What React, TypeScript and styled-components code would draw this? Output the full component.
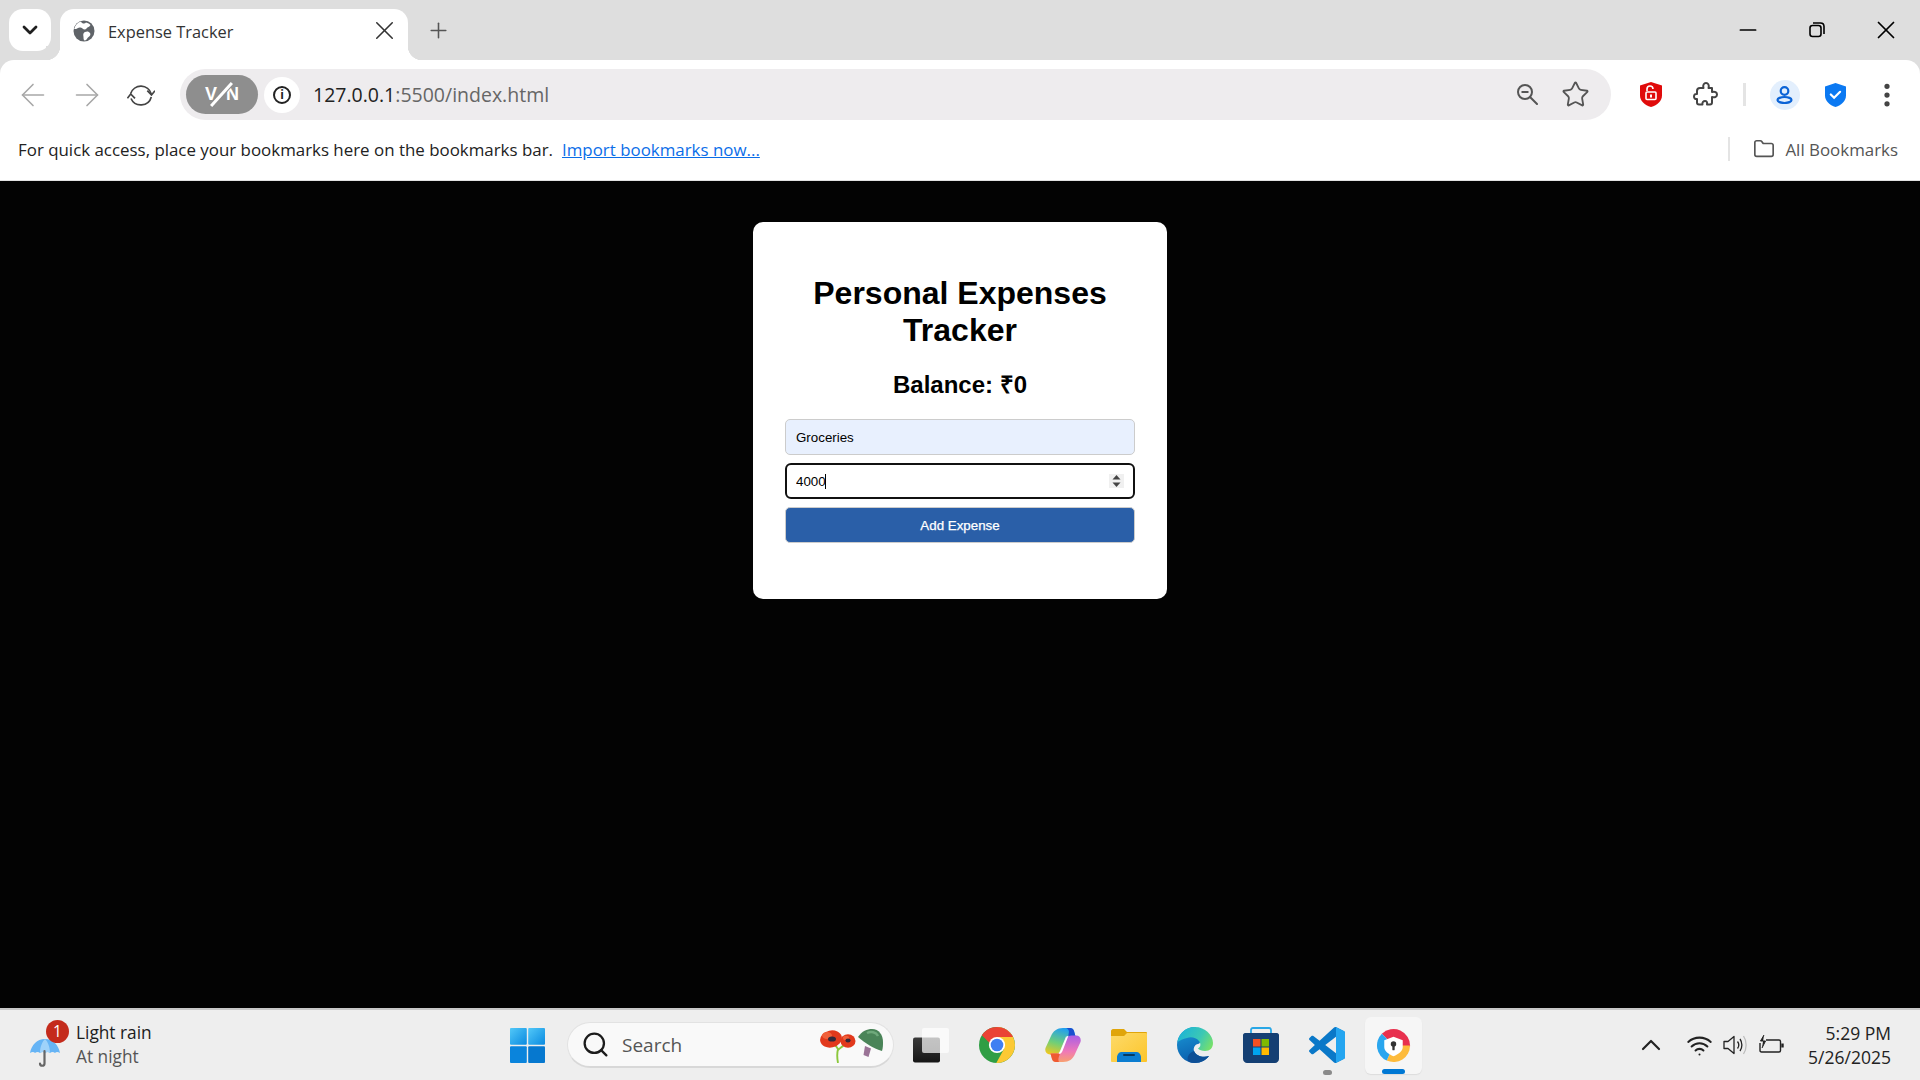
import React from "react";
import styled, { createGlobalStyle } from "styled-components";
import {
  ArrowLeft,
  ArrowRight,
  ChevronDown,
  ChevronUp,
  EllipsisVertical,
  Folder,
  Minus,
  Plus,
  Search,
  Star,
  Wifi,
  X,
} from "lucide-react";

const GlobalStyle = createGlobalStyle`
  html, body {
    margin: 0;
    padding: 0;
    overflow: hidden;
    font-family: "Open Sans", "Noto Sans", sans-serif;
  }
  * { box-sizing: border-box; }
`;

const GlobeIcon = () => (
  <svg width="22" height="22" viewBox="0 0 22 22">
    <circle cx="11" cy="11" r="10.5" fill="#5f6368" />
    <path d="M8 1.500C9 4 12 4 13 2.500c2 .5 3.500 1.500 4.500 2.500-1 2-3 2-4 3.500-1 1.500-3 1-4 0S6 7 5 8 2 9 1.200 9C2 5.500 4.500 2.500 8 1.500z" fill="#fff" />
    <path d="M12 12c2-1 4-.5 5 1s0 3-1.500 4-2 3.500-3.500 3.500-1.500-2-1.500-3.500-1-3.500 1.500-5z" fill="#fff" />
  </svg>
);

const ReloadIcon = () => (
  <svg width="28" height="24" viewBox="0 0 28 24" fill="none" stroke="#444" strokeWidth="1.700">
    <path d="M3.700 10.500A10.800 10.800 0 0 1 24.300 11" />
    <path d="M20.300 7.700l4.200 4.300 3.500-4.300" />
    <path d="M24.300 14A10.800 10.800 0 0 1 4 15.500" />
    <path d="M.4 15.300L3.700 11l4.300 4.300" />
  </svg>
);

const ZoomOutIcon = () => (
  <svg width="21" height="21" viewBox="0 0 21 21" fill="none" stroke="#555" strokeWidth="2">
    <circle cx="8" cy="8" r="7" />
    <path d="M13 13l7 7" strokeLinecap="round" />
    <path d="M4.500 8h7" />
  </svg>
);

const RedShield = () => (
  <svg width="22" height="25" viewBox="0 0 22 25">
    <path d="M11 0l11 3.500v10c0 5.500-4.500 9.500-11 11.500C4.500 23 0 19 0 13.500v-10z" fill="#e00b0b" />
    <path d="M7 9V7a3 3 0 0 1 6 0" fill="none" stroke="#fff" strokeWidth="1.600" />
    <rect x="6" y="10" width="10" height="7.500" rx="1" fill="none" stroke="#fff" strokeWidth="1.600" />
    <rect x="10" y="12.500" width="2" height="3" fill="#fff" />
  </svg>
);

const PuzzleIcon = () => (
  <svg width="25" height="25" viewBox="0 0 25 25" fill="none" stroke="#444" strokeWidth="2" strokeLinejoin="round">
    <path d="M7 6h3.500C9.500 3 11 1 13 1s3.500 2 2.500 5H19v4c3-1 5 .5 5 2.500S22 16 19 15v5.500c0 1-1 2-2 2h-3c.5-2.500-.5-3.500-2-3.500s-3 1-2.500 3.500H6c-1 0-2-1-2-2V17c-2 .5-3-1-3-2.500S2 11.500 4 12V9c0-2 1-3 3-3z" />
  </svg>
);

const ProfileIcon = () => (
  <svg width="17" height="18" viewBox="0 0 17 18" fill="none" stroke="#0b63d6" strokeWidth="2.200">
    <circle cx="8.500" cy="5" r="3.800" />
    <ellipse cx="8.500" cy="14" rx="7" ry="3" />
  </svg>
);

const BlueShield = () => (
  <svg width="21" height="24" viewBox="0 0 21 24">
    <path d="M10.500 0l10.500 3.500v9C21 18 16.500 22 10.500 24 4.500 22 0 18 0 12.500v-9z" fill="#0b79f2" />
    <path d="M5.800 11.500l3.300 3.300 6-6" fill="none" stroke="#fff" strokeWidth="2.200" strokeLinecap="round" />
  </svg>
);

const RestoreIcon = () => (
  <svg width="16" height="16" viewBox="0 0 16 16" fill="none" stroke="#000" strokeWidth="1.600">
    <rect x="1" y="3.500" width="11" height="11" rx="2.500" />
    <path d="M4 1h7.500C13.500 1 15 2.500 15 4.500V12" />
  </svg>
);

const SpinnerIcon = () => (
  <svg width="9" height="12" viewBox="0 0 9 12" fill="#444">
    <path d="M4.500 0L8.500 4.500H.5z" />
    <path d="M4.500 12L.5 7.500h8z" />
  </svg>
);

const UmbrellaIcon = () => (
  <svg width="30" height="30" viewBox="0 0 30 30">
    <path d="M15 1C7 1 1.500 7 0 15c2-1.500 4-1.500 5 0 1.500-1.500 3.500-1.500 5 0 1.500-1.500 3.500-1.500 5 0 1.500-1.500 3.500-1.500 5 0 1.500-1.500 3.500-1.500 5 0 1-1.500 3-1.500 5 0C28.500 7 23 1 15 1z" fill="#66b4f5" />
    <path d="M15 1c-3 3-5 8-5 14 1.500-1.500 3.500-1.500 5 0 1.500-1.500 3.500-1.500 5 0 0-6-2-11-5-14z" fill="#9fd2fa" />
    <path d="M14.500 13v12.500c0 3-4.500 3-4.500 0" fill="none" stroke="#666" strokeWidth="2.200" strokeLinecap="round" />
  </svg>
);

const WindowsLogo = () => (
  <svg width="35" height="35" viewBox="0 0 35 35">
    <defs>
      <linearGradient id="winA" x1="0" y1="0" x2="1" y2="1">
        <stop offset="0" stopColor="#52c8f8" />
        <stop offset="1" stopColor="#0a8ae0" />
      </linearGradient>
    </defs>
    <rect x="0" y="0" width="16.800" height="16.800" rx="1" fill="url(#winA)" />
    <rect x="18.200" y="0" width="16.800" height="16.800" rx="1" fill="url(#winA)" />
    <rect x="0" y="18.200" width="16.800" height="16.800" rx="1" fill="#0a84dc" />
    <rect x="18.200" y="18.200" width="16.800" height="16.800" rx="1" fill="#0678cf" />
  </svg>
);

const PoppyIcon = () => (
  <svg width="37" height="34" viewBox="0 0 37 34">
    <path d="M18 34c-1-5-1-10 0-14-1-2-2-3-4-4M18 21c2-2 4-3 6-5" fill="none" stroke="#8cc83c" strokeWidth="1.900" />
    <ellipse cx="11" cy="10" rx="11" ry="8.500" transform="rotate(-12 11 10)" fill="#e2391c" />
    <ellipse cx="7" cy="6.500" rx="5" ry="3.500" fill="#f0603a" />
    <ellipse cx="12" cy="10" rx="4" ry="2.600" fill="#33283a" />
    <ellipse cx="28" cy="12" rx="7.500" ry="6.800" fill="#e2391c" />
    <ellipse cx="26" cy="9" rx="3" ry="2.300" fill="#f0603a" />
    <ellipse cx="28" cy="11.500" rx="2.600" ry="2" fill="#33283a" />
  </svg>
);

const HelmetIcon = () => (
  <svg width="29" height="28" viewBox="0 0 29 28">
    <path d="M8 17l6 2.500-2.500 8.500-5-2z" fill="#9a7396" />
    <path d="M1 8C5 2 10 0 15 0c7 0 11 6 11 13 0 3 0 6-1 9C17 20 8 14 1 8z" fill="#4a8458" />
    <path d="M10 4c4-2 9-1 11 3" fill="none" stroke="#6fa97b" strokeWidth="2.500" />
  </svg>
);

const TaskViewIcon = () => (
  <svg width="36" height="35" viewBox="0 0 36 35">
    <defs>
      <linearGradient id="tvA" x1="0" y1="0" x2="0" y2="1">
        <stop offset="0" stopColor="#3a3a3a" />
        <stop offset="1" stopColor="#161616" />
      </linearGradient>
    </defs>
    <rect x="0" y="9.500" width="27" height="25" rx="2" fill="url(#tvA)" />
    <rect x="9" y="0" width="27" height="25" rx="2" fill="#fff" fillOpacity="0.7" />
  </svg>
);

const ChromeIcon = () => (
  <svg width="36" height="36" viewBox="4 4 40 40">
    <circle cx="24" cy="24" r="20" fill="#2f9e44" />
    <path d="M24 4v20l8 4-8.800 16h.8c11 0 20-9 20-20S35 4 24 4z" fill="#fcc934" />
    <path d="M41.800 15H24v13l-3-1L7.200 13.300C10.700 7.700 16.900 4 24 4c7.800 0 14.500 4.500 17.800 11z" fill="#ea4335" />
    <circle cx="24" cy="24" r="9" fill="#fff" />
    <circle cx="24" cy="24" r="7" fill="#3f7ff2" />
  </svg>
);

const CopilotIcon = () => (
  <svg width="36" height="36" viewBox="0 0 36 36">
    <defs>
      <linearGradient id="coA" x1="0.500" y1="0" x2="0.200" y2="1">
        <stop offset="0" stopColor="#22a0ee" />
        <stop offset="0.550" stopColor="#6fcf78" />
        <stop offset="1" stopColor="#f0c81e" />
      </linearGradient>
      <linearGradient id="coB" x1="0.500" y1="0" x2="0.500" y2="1">
        <stop offset="0" stopColor="#a95fe6" />
        <stop offset="0.600" stopColor="#ef78b8" />
        <stop offset="1" stopColor="#f8a070" />
      </linearGradient>
    </defs>
    <path d="M18 1h7c2 0 3.500 1 4 3l1.500 5.500H21L15 24c-1 2-3 3.500-5.500 3.500H5c-3.500 0-5.500-3-4.500-6.500L6 9c2-5 6-8 12-8z" fill="url(#coA)" />
    <path d="M20 1h5c2 0 3.500 1 4 3l1.500 5.500H23l.8-3.500C24.500 3 22.500 1 20 1z" fill="#1a4fcf" />
    <path d="M18 35h-7c-2 0-3.500-1-4-3L5.500 26.500H15L21 12c1-2 3-3.500 5.500-3.500H31c3.500 0 5.500 3 4.500 6.500L30 27c-2 5-6 8-12 8z" fill="url(#coB)" />
    <path d="M14 35h-3c-2 0-3.500-1-4-3L5.500 26.500H15l-1.200 3.500c-.8 2.500-.3 4 .2 5z" fill="#ef5a32" />
    <path d="M15 25l6-14c.6-1.200 1.500-2 2.500-2.500L17.500 24c-.8 2-2 3-3.500 3-.1-.2.500-1 1-2z" fill="#fff" />
  </svg>
);

const ExplorerIcon = () => (
  <svg width="36" height="33" viewBox="0 0 36 33">
    <defs>
      <linearGradient id="exA" x1="0" y1="0" x2="1" y2="1">
        <stop offset="0" stopColor="#fdda6a" />
        <stop offset="1" stopColor="#fcc52a" />
      </linearGradient>
    </defs>
    <path d="M0 2c0-1 1-2 2-2h11l3 3h19c.5 0 1 .5 1 1v3H0z" fill="#e0a50a" />
    <path d="M0 7h13l3-3h19c.5 0 1 .5 1 1v27c0 .5-.5 1-1 1H1c-.5 0-1-.5-1-1z" fill="url(#exA)" />
    <path d="M6 33v-5c0-2 2-5 4-5h16c2 0 4 3 4 5v5z" fill="#0b7dd1" />
    <rect x="12" y="25" width="12" height="2" rx="1" fill="#06385f" />
  </svg>
);

const EdgeIcon = () => (
  <svg width="36" height="36" viewBox="0 0 36 36">
    <defs>
      <linearGradient id="edA" x1="0" y1="0" x2="0.300" y2="1">
        <stop offset="0" stopColor="#1b9bd8" />
        <stop offset="1" stopColor="#0b5fae" />
      </linearGradient>
      <linearGradient id="edB" x1="0" y1="0.300" x2="1" y2="0.700">
        <stop offset="0" stopColor="#1db4d6" />
        <stop offset="0.600" stopColor="#3cc8b4" />
        <stop offset="1" stopColor="#77e06a" />
      </linearGradient>
    </defs>
    <path d="M18 0C8 0 0 8 0 18s8 18 18 18c6 0 11-3 14-7-6 2-13 0-15-5-1-3 1-7 4-7 4-1 3-7-3-17z" fill="url(#edA)" />
    <path d="M.5 15C2 6 9 0 18 0c10 0 18 8 18 16 0 5-3 8-8 8-3 0-6-1-7-2.500 3-1.500 3-5 1-7.500-3-3.500-8-4.500-12-3C6 12 2.500 13.500.5 15z" fill="url(#edB)" />
    <path d="M17 24c2 5 9 7 15 5-3 4-8 7-14 7-2 0-4-.5-6-1-3-3-1-9 5-11z" fill="#0d4f96" />
  </svg>
);

const StoreIcon = () => (
  <svg width="36" height="36" viewBox="0 0 36 36">
    <path d="M8 6V3c0-1 .5-2 2-2h16c1.500 0 2 1 2 2v3" fill="none" stroke="#29a7e6" strokeWidth="1.800" />
    <path d="M0 8c0-1 1-2 2-2h32c1 0 2 1 2 2v24c0 2-2 4-4 4H4c-2 0-4-2-4-4z" fill="#143f73" />
    <rect x="10" y="12" width="7.500" height="7.500" fill="#f25022" />
    <rect x="18.500" y="12" width="7.500" height="7.500" fill="#7fba00" />
    <rect x="10" y="20.500" width="7.500" height="7.500" fill="#00a4ef" />
    <rect x="18.500" y="20.500" width="7.500" height="7.500" fill="#ffb900" />
  </svg>
);

const VSCodeIcon = () => (
  <svg width="36" height="36" viewBox="0 0 100 100">
    <path d="M96.500 10.800L75.900.9c-2.400-1.100-5.200-.6-7.100 1.200L29.400 38.100 12.200 25.100c-1.600-1.200-3.800-1.100-5.300.2l-5.500 5c-1.800 1.600-1.800 4.500 0 6.100L16.300 50 1.400 63.600c-1.800 1.600-1.800 4.500 0 6.100l5.500 5c1.500 1.300 3.700 1.400 5.300.2l17.200-13 39.400 36c1.900 1.900 4.700 2.300 7.100 1.200l20.600-9.900c2.200-1 3.500-3.200 3.500-5.600V16.400c0-2.400-1.400-4.600-3.500-5.600zM75 72.700L45.100 50 75 27.300z" fill="#0a78c8" />
    <path d="M71 1.200c1.500-.7 3.300-1 4.900-.3l20.600 9.900c2.100 1 3.500 3.200 3.500 5.600v66.900c0 2.400-1.300 4.600-3.500 5.600L75.900 99c-1.600.7-3.400.5-4.900-.3 2.300 1.400 4 .2 4-2.500V3.700c0-2.700-1.700-3.900-4-2.500z" fill="#24a5f0" />
  </svg>
);

const VaultIcon = () => (
  <svg width="35" height="35" viewBox="0 0 36 36">
    <path d="M18 18L6 6A17 17 0 0 1 35 19z" fill="#e8304e" />
    <path d="M18 18h17A17 17 0 0 1 11 33.500z" fill="#fdbb3c" />
    <path d="M18 18L11 33.500A17 17 0 0 1 6 6z" fill="#2aa6ee" />
    <path d="M18 9l9.500 3.500v7C27.500 24 23 27 18 29c-5-2-9.500-5-9.500-9.500v-7z" fill="#fff" />
    <circle cx="18" cy="16.500" r="2.800" fill="#333" />
    <rect x="16.800" y="17" width="2.400" height="6" rx="1" fill="#333" />
  </svg>
);

const SpeakerIcon = () => (
  <svg width="24" height="20" viewBox="0 0 24 20" fill="none" stroke="#222" strokeWidth="1.300">
    <path d="M1 6.500h4l6-5v17l-6-5H1z" strokeLinejoin="round" />
    <path d="M14.500 6.500c1.500 2 1.500 5 0 7M17 4c2.500 3.500 2.500 8.500 0 12" />
    <path d="M20.500 1c3.500 5 3.500 13 0 18" stroke="#bdbdbd" />
  </svg>
);

const BatteryIcon = () => (
  <svg width="25" height="20" viewBox="0 0 25 20" fill="none" stroke="#222" strokeWidth="1.400">
    <path d="M7 5h13c1 0 1.500.5 1.500 1.500v9c0 1-.5 1.500-1.500 1.500H2.500c-1 0-1.500-.5-1.500-1.500V8" />
    <path d="M23.500 8.500v4" strokeWidth="2.400" />
    <path d="M5 0L1.500 6h5L3 13" fill="#222" strokeWidth="1" />
  </svg>
);

const App = () => {
  return (
    <Screen>
      <GlobalStyle />
      <TabStrip>
        <TabSearch>
          <ChevronDown size={24} strokeWidth={2.8} color="#1f1f1f" />
        </TabSearch>
        <Tab>
          <GlobeIcon />
          <TabTitle>Expense Tracker</TabTitle>
          <X size={31} strokeWidth={1.2} color="#333" />
        </Tab>
        <NewTab>
          <Plus size={25} strokeWidth={1.5} color="#555" />
        </NewTab>
        <WindowControls>
          <WindowButton>
            <Minus size={26} strokeWidth={1.6} color="#000" />
          </WindowButton>
          <WindowButton>
            <RestoreIcon />
          </WindowButton>
          <WindowButton>
            <X size={30} strokeWidth={1.4} color="#000" />
          </WindowButton>
        </WindowControls>
      </TabStrip>

      <Toolbar>
        <NavButton>
          <ArrowLeft size={36} strokeWidth={1.1} color="#a8a8a8" />
        </NavButton>
        <NavButton>
          <ArrowRight size={36} strokeWidth={1.1} color="#a8a8a8" />
        </NavButton>
        <NavButton>
          <ReloadIcon />
        </NavButton>
        <AddressPill>
          <VpnBadge>
            V<VpnSlash />N
          </VpnBadge>
          <InfoCircle>
            <InfoDot>i</InfoDot>
          </InfoCircle>
          <Url>
            127.0.0.1<UrlRest>:5500/index.html</UrlRest>
          </Url>
          <PillButton $first>
            <ZoomOutIcon />
          </PillButton>
          <PillButton>
            <Star size={29} strokeWidth={1.5} color="#555" />
          </PillButton>
        </AddressPill>
        <ToolButton $w={54} $first>
          <RedShield />
        </ToolButton>
        <ToolButton $w={54}>
          <PuzzleIcon />
        </ToolButton>
        <ToolDivider />
        <ToolButton $w={51}>
          <ProfileCircle>
            <ProfileIcon />
          </ProfileCircle>
        </ToolButton>
        <ToolButton $w={51}>
          <BlueShield />
        </ToolButton>
        <ToolButton $w={51}>
          <EllipsisVertical size={30} strokeWidth={2.2} color="#444" />
        </ToolButton>
      </Toolbar>

      <BookmarksBar>
        <span>For quick access, place your bookmarks here on the bookmarks bar.</span>
        <ImportLink>Import bookmarks now...</ImportLink>
        <BookmarksDivider />
        <Folder size={22} strokeWidth={1.8} color="#555" />
        <AllBookmarks>All Bookmarks</AllBookmarks>
      </BookmarksBar>

      <Page>
        <Card>
          <Title>Personal Expenses Tracker</Title>
          <Balance>Balance: ₹0</Balance>
          <Form>
            <NameInput type="text" defaultValue="Groceries" />
            <AmountField>
              <AmountInput type="number" defaultValue={4000} />
              <Caret />
              <Spinner>
                <SpinnerIcon />
              </Spinner>
            </AmountField>
            <AddButton type="button">Add Expense</AddButton>
          </Form>
        </Card>
      </Page>

      <TaskBar>
        <Weather>
          <WeatherIcon>
            <UmbrellaIcon />
            <WeatherBadge>1</WeatherBadge>
          </WeatherIcon>
          <WeatherText>
            <WeatherMain>Light rain</WeatherMain>
            <WeatherSub>At night</WeatherSub>
          </WeatherText>
        </Weather>
        <WindowsLogo />
        <SearchPill>
          <Search size={29} strokeWidth={1.9} color="#1c1c1c" />
          <SearchLabel>Search</SearchLabel>
          <SearchArt>
            <PoppyIcon />
            <HelmetIcon />
          </SearchArt>
        </SearchPill>
        <Apps>
          <AppButton>
            <TaskViewIcon />
          </AppButton>
          <AppButton>
            <ChromeIcon />
          </AppButton>
          <AppButton>
            <CopilotIcon />
          </AppButton>
          <AppButton>
            <ExplorerIcon />
          </AppButton>
          <AppButton>
            <EdgeIcon />
          </AppButton>
          <AppButton>
            <StoreIcon />
          </AppButton>
          <AppButton>
            <VSCodeIcon />
            <RunningDot />
          </AppButton>
          <AppButton>
            <ActiveApp>
              <VaultIcon />
              <ActiveBar />
            </ActiveApp>
          </AppButton>
        </Apps>
        <Tray>
          <TrayChevron>
            <ChevronUp size={32} strokeWidth={1.6} color="#222" />
          </TrayChevron>
          <TrayIcon>
            <Wifi size={27} strokeWidth={1.8} color="#222" />
          </TrayIcon>
          <TrayIcon>
            <SpeakerIcon />
          </TrayIcon>
          <TrayIcon>
            <BatteryIcon />
          </TrayIcon>
          <Clock>
            <span>5:29 PM</span>
            <span>5/26/2025</span>
          </Clock>
        </Tray>
      </TaskBar>
    </Screen>
  );
};

export default App;

const Screen = styled.div`
  width: 1920px;
  height: 1080px;
  display: flex;
  flex-direction: column;
  background: #dedede;
`;

const TabStrip = styled.div`
  height: 60px;
  background: #dedede;
  display: flex;
  align-items: flex-end;
  padding-left: 9px;
`;
const TabSearch = styled.div`
  width: 42px;
  height: 42px;
  margin-bottom: 9px;
  border-radius: 14px;
  background: #fff;
  display: flex;
  align-items: center;
  justify-content: center;
`;
const Tab = styled.div`
  width: 348px;
  height: 51px;
  margin-left: 9px;
  padding: 0 8px 7px 13px;
  border-radius: 14px 14px 0 0;
  background: #fff;
  display: flex;
  align-items: center;
  position: relative;
  & > svg {
    margin-bottom: 1px;
  }
  &::before,
  &::after {
    content: "";
    position: absolute;
    bottom: 0;
    width: 14px;
    height: 14px;
  }
  &::before {
    left: -14px;
    background: radial-gradient(circle at 0 0, #dedede 14px, #fff 14.5px);
  }
  &::after {
    right: -14px;
    background: radial-gradient(circle at 100% 0, #dedede 14px, #fff 14.5px);
  }
`;
const TabTitle = styled.div`
  flex: 1;
  margin-left: 13px;
  font-size: 16.4px;
  color: #333;
  white-space: nowrap;
`;
const NewTab = styled.div`
  height: 60px;
  margin-left: 18px;
  padding-top: 18px;
`;
const WindowControls = styled.div`
  margin-left: auto;
  height: 60px;
  display: flex;
`;
const WindowButton = styled.div`
  width: 69px;
  display: flex;
  align-items: center;
  justify-content: center;
`;

const Toolbar = styled.div`
  height: 62px;
  background: #fff;
  border-radius: 14px 14px 0 0;
  display: flex;
  align-items: center;
  padding: 9px 8px 2px 6px;
`;
const NavButton = styled.div`
  width: 54px;
  display: flex;
  justify-content: center;
`;
const AddressPill = styled.div`
  width: 1431px;
  height: 51px;
  margin-left: 12px;
  padding: 0 12px 0 6px;
  border-radius: 26px;
  background: #eeecee;
  display: flex;
  align-items: center;
`;
const VpnBadge = styled.div`
  width: 72px;
  height: 39px;
  border-radius: 20px;
  background: #8e8e8e;
  color: #fff;
  font-family: "Liberation Sans", sans-serif;
  font-size: 18px;
  font-weight: 700;
  display: flex;
  align-items: center;
  justify-content: center;
`;
const VpnSlash = styled.span`
  width: 3px;
  height: 31px;
  margin: 0 3px;
  background: #fff;
  box-shadow: 0 0 0 1px #8e8e8e;
  transform: rotate(42deg);
`;
const InfoCircle = styled.div`
  width: 36px;
  height: 36px;
  margin-left: 6px;
  border-radius: 50%;
  background: #fff;
  display: flex;
  align-items: center;
  justify-content: center;
`;
const InfoDot = styled.div`
  width: 18px;
  height: 18px;
  border: 2px solid #222;
  border-radius: 50%;
  color: #222;
  font-size: 12px;
  font-weight: 700;
  line-height: 14px;
  text-align: center;
`;
const Url = styled.div`
  margin-left: 13px;
  font-size: 19.5px;
  color: #222;
`;
const UrlRest = styled.span`
  color: #666;
`;
const PillButton = styled.div<{ $first?: boolean }>`
  width: 48px;
  display: flex;
  justify-content: center;
  margin-left: ${(props) => (props.$first ? "auto" : "0")};
`;
const ToolButton = styled.div<{ $w: number; $first?: boolean }>`
  width: ${(props) => props.$w}px;
  margin-left: ${(props) => (props.$first ? "13px" : "0")};
  display: flex;
  justify-content: center;
`;
const ToolDivider = styled.div`
  width: 3px;
  height: 23px;
  margin: 0 13px 0 11px;
  background: #e4e4e4;
`;
const ProfileCircle = styled.div`
  width: 30px;
  height: 30px;
  border-radius: 50%;
  background: #e3effd;
  display: flex;
  align-items: center;
  justify-content: center;
`;

const BookmarksBar = styled.div`
  height: 59px;
  background: #fff;
  border-bottom: 1px solid #e2e2e2;
  display: flex;
  align-items: center;
  padding: 0 22px 4px 18px;
  font-size: 16.9px;
  color: #222;
`;
const ImportLink = styled.span`
  margin-left: 9px;
  color: #0b6ee8;
  text-decoration: underline;
`;
const BookmarksDivider = styled.div`
  width: 2px;
  height: 24px;
  margin-left: auto;
  margin-right: 23px;
  background: #e4e4e4;
`;
const AllBookmarks = styled.span`
  margin-left: 10px;
  color: #555;
`;

const Page = styled.div`
  flex: 1;
  background: #030303;
  display: flex;
  justify-content: center;
  align-items: flex-start;
  padding-top: 41px;
`;
const Card = styled.div`
  width: 414px;
  height: 377px;
  padding: 32px;
  border-radius: 10px;
  background: #fff;
  color: #000;
  text-align: center;
  font-family: "Liberation Sans", Arial, sans-serif;
`;
const Title = styled.h1`
  margin: 21.44px 0;
  font-size: 32px;
  font-weight: 700;
`;
const Balance = styled.h2`
  margin: 19.92px 0 21px;
  font-size: 24px;
  line-height: 27.6px;
  font-weight: 700;
`;
const Form = styled.div`
  display: flex;
  flex-direction: column;
  gap: 8px;
`;
const NameInput = styled.input`
  width: 100%;
  height: 36px;
  padding: 10px;
  border: 1px solid #ccc;
  border-radius: 5px;
  background: #e8f0fe;
  color: #000;
  font-family: "Liberation Sans", Arial, sans-serif;
  font-size: 13.33px;
  outline: none;
`;
const AmountField = styled.div`
  height: 36px;
  position: relative;
`;
const AmountInput = styled.input`
  width: 100%;
  height: 36px;
  padding: 9px;
  border: 2px solid #111;
  border-radius: 6px;
  background: #fff;
  color: #000;
  font-family: "Liberation Sans", Arial, sans-serif;
  font-size: 13.33px;
  outline: none;
  &::-webkit-inner-spin-button {
    appearance: none;
  }
`;
const Caret = styled.div`
  position: absolute;
  top: 11px;
  left: 40px;
  width: 1px;
  height: 15px;
  background: #000;
`;
const Spinner = styled.div`
  position: absolute;
  top: 11px;
  right: 11px;
  width: 15px;
  height: 14px;
  background: #f0f0f0;
  display: flex;
  align-items: center;
  justify-content: center;
`;
const AddButton = styled.button`
  width: 100%;
  height: 36px;
  border: 1px solid #ccc;
  border-radius: 5px;
  background: #2a5fa8;
  color: #fff;
  font-family: "Liberation Sans", Arial, sans-serif;
  font-size: 13.33px;
  -webkit-text-stroke: 0.25px #fff;
`;

const TaskBar = styled.div`
  height: 72px;
  background: #eeeeee;
  border-top: 2px solid #c8c8c8;
  display: flex;
  align-items: center;
`;
const Weather = styled.div`
  width: 510px;
  padding-left: 30px;
  display: flex;
  align-items: center;
`;
const WeatherIcon = styled.div`
  width: 46px;
  height: 50px;
  padding-top: 18px;
  position: relative;
`;
const WeatherBadge = styled.div`
  position: absolute;
  top: 0;
  left: 16px;
  width: 23px;
  height: 23px;
  border-radius: 50%;
  background: #c42b1c;
  color: #fff;
  font-size: 15.5px;
  line-height: 23px;
  text-align: center;
`;
const WeatherText = styled.div`
  display: flex;
  flex-direction: column;
  padding-bottom: 1px;
  font-size: 17.3px;
  line-height: 24px;
`;
const WeatherMain = styled.span`
  color: #1c1c1c;
`;
const WeatherSub = styled.span`
  color: #555;
`;
const SearchPill = styled.div`
  width: 327px;
  height: 46px;
  margin-left: 22px;
  padding: 0 7px 0 13px;
  border: 1px solid #e2e2e2;
  border-bottom: 2px solid #d8d8d8;
  border-radius: 23px;
  background: #f9f9f9;
  display: flex;
  align-items: center;
`;
const SearchLabel = styled.span`
  margin-left: 12px;
  font-size: 19px;
  color: #555;
`;
const SearchArt = styled.div`
  margin-left: auto;
  margin-top: 3px;
  display: flex;
  align-items: flex-start;
`;
const Apps = styled.div`
  margin-left: 4px;
  display: flex;
`;
const AppButton = styled.div`
  width: 66px;
  height: 57px;
  display: flex;
  align-items: center;
  justify-content: center;
  position: relative;
`;
const RunningDot = styled.div`
  position: absolute;
  bottom: -1px;
  left: 29px;
  width: 9px;
  height: 5px;
  border-radius: 3px;
  background: #8a8a8a;
`;
const ActiveApp = styled.div`
  width: 57px;
  height: 57px;
  border-radius: 6px;
  background: #f6f6f6;
  box-shadow: 0 1px 1px #dcdcdc;
  display: flex;
  align-items: center;
  justify-content: center;
  position: relative;
`;
const ActiveBar = styled.div`
  position: absolute;
  bottom: 0;
  left: 17px;
  width: 23px;
  height: 5px;
  border-radius: 3px;
  background: #0078d4;
`;
const Tray = styled.div`
  margin-left: auto;
  padding-right: 29px;
  display: flex;
  align-items: center;
`;
const TrayChevron = styled.div`
  width: 36px;
  margin-right: 12px;
  display: flex;
  justify-content: center;
`;
const TrayIcon = styled.div`
  width: 36px;
  display: flex;
  justify-content: center;
`;
const Clock = styled.div`
  margin-left: 19px;
  padding-bottom: 1px;
  display: flex;
  flex-direction: column;
  align-items: flex-end;
  font-size: 17.5px;
  line-height: 24px;
  color: #222;
`;
